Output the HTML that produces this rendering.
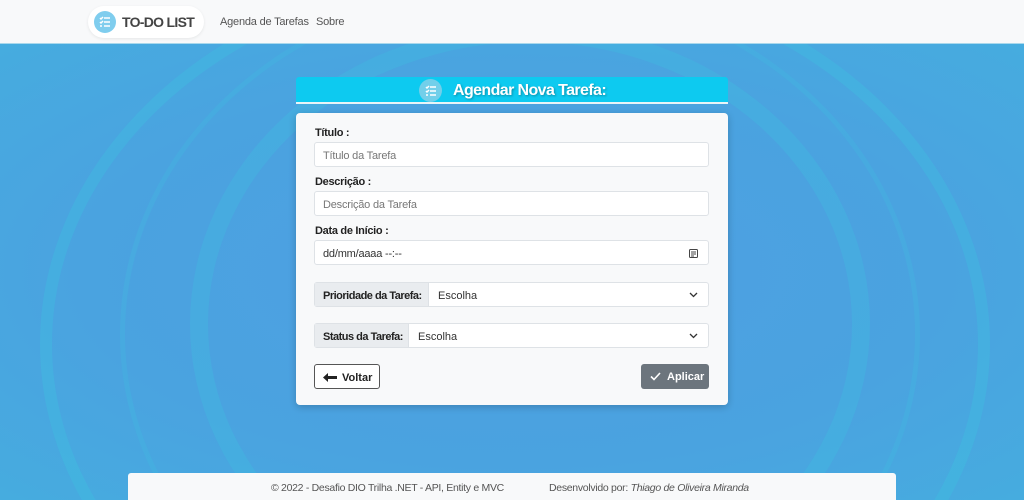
<!DOCTYPE html>
<html><head><meta charset="utf-8"><style>
*{box-sizing:border-box;margin:0;padding:0}
html,body{width:1024px;height:500px;overflow:hidden}
body{font-family:"Liberation Sans",sans-serif;position:relative;background:#4aa6e0;white-space:nowrap}
.bg{position:absolute;left:0;top:44px;width:1024px;height:456px;overflow:hidden;background:radial-gradient(ellipse at 50% 50%,#4e9fe2 0%,#4aa3e0 60%,#46acdf 100%)}
.ring{position:absolute;border-radius:50%;border-style:solid;border-color:rgba(60,200,225,.45)}
.nav{position:absolute;left:0;top:0;width:1024px;height:44px;background:#f8f9fa;border-bottom:1px solid #a9d8ec}
.logo{position:absolute;left:88px;top:6px;width:116px;height:32px;background:#fff;border-radius:16px;box-shadow:0 1px 3px rgba(0,0,0,.08)}
.ic{position:absolute;border-radius:50%;background:#7fcdee}
.logo span{position:absolute;left:34px;top:8px;font-size:14px;font-weight:bold;color:#444;letter-spacing:-.7px}
.lnk{position:absolute;top:16px;font-size:11px;color:#555;letter-spacing:-.2px}
.hdr{position:absolute;left:296px;top:77px;width:432px;height:27px;background:#0dcaf0;border-bottom:2px solid #e8f4f8;border-radius:3px 3px 0 0}
.hdr span{position:absolute;left:157px;top:5px;color:#fff;font-weight:bold;font-size:16px;letter-spacing:-.6px;text-shadow:1px 1px 2px rgba(0,0,0,.3)}
.card{position:absolute;left:296px;top:113px;width:432px;height:292px;background:#f8f9fa;border-radius:4px;box-shadow:0 2px 8px rgba(0,0,0,.2)}
.lb{position:absolute;left:19px;font-size:11px;font-weight:bold;color:#222;letter-spacing:-.3px}
.in{position:absolute;left:18px;width:395px;height:25px;background:#fff;border:1px solid #dee2e6;border-radius:3px;font-size:11px;color:#777;padding:7px 8px 0;letter-spacing:-.2px}
.sel{position:absolute;left:18px;width:395px;height:25px;background:#fff;border:1px solid #dee2e6;border-radius:3px;font-size:11px;color:#333}
.sel .g{position:absolute;left:0;top:0;height:23px;background:#e9ecef;border-right:1px solid #dee2e6;font-weight:bold;padding:7px 0 0 8px;color:#222;letter-spacing:-.5px}
.sel .v{position:absolute;top:7px}
.sel svg{position:absolute;right:10px;top:9px}
.btn{position:absolute;top:251px;height:25px;border-radius:3px;font-size:11px;font-weight:bold;padding:7px 8px 0}
.foot{position:absolute;left:128px;top:473px;width:768px;height:27px;background:#f8f9fa;border-radius:3px 3px 0 0;font-size:10.5px;color:#555;letter-spacing:-.3px}
</style></head><body>
<div class="bg">
<div class="ring" style="left:40px;top:-80px;width:950px;height:760px;border-width:12px;border-color:rgba(60,200,225,.3)"></div>
<div class="ring" style="left:190px;top:-20px;width:680px;height:600px;border-width:18px;border-color:rgba(60,200,225,.25)"></div>
<div class="ring" style="left:120px;top:-60px;width:800px;height:700px;border-width:5px;border-color:rgba(60,200,225,.2)"></div>
</div>
<div class="nav">
<div class="logo"><div class="ic" style="left:6px;top:5px;width:22px;height:22px"></div>
<svg style="position:absolute;left:11px;top:10px" width="12" height="12" viewBox="0 0 12 12" stroke="#fff" stroke-width="1.5" fill="none"><path d="M1 2l1 1 2-2M1 6l1 1 2-2M1 10h2M5 2h6M5 6h6M5 10h6"/></svg>
<span>TO-DO LIST</span></div>
<div class="lnk" style="left:220px">Agenda de Tarefas</div>
<div class="lnk" style="left:316px">Sobre</div>
</div>
<div class="hdr"><div class="ic" style="left:123px;top:2px;width:23px;height:23px;background:#72cfea"></div>
<svg style="position:absolute;left:129px;top:8px" width="12" height="12" viewBox="0 0 12 12" stroke="#fff" stroke-width="1.5" fill="none"><path d="M1 2l1 1 2-2M1 6l1 1 2-2M1 10h2M5 2h6M5 6h6M5 10h6"/></svg>
<span>Agendar Nova Tarefa:</span></div>
<div class="card">
<div class="lb" style="top:14px">Título :</div>
<div class="in" style="top:29px">Título da Tarefa</div>
<div class="lb" style="top:63px">Descrição :</div>
<div class="in" style="top:78px">Descrição da Tarefa</div>
<div class="lb" style="top:112px">Data de Início :</div>
<div class="in" style="top:127px;color:#333">dd/mm/aaaa --:--
<svg style="position:absolute;right:10px;top:7px" width="9" height="10" viewBox="0 0 9 10" fill="none" stroke="#444"><rect x=".5" y="1.5" width="8" height="8" rx="1"/><path d="M2 4h5M2 6h5M2 8h3"/></svg></div>
<div class="sel" style="top:169px"><div class="g" style="width:114px">Prioridade da Tarefa:</div><div class="v" style="left:123px">Escolha</div><svg width="9" height="6" viewBox="0 0 9 6" fill="none" stroke="#333" stroke-width="1.3"><path d="M1 1l3.5 3.5L8 1"/></svg></div>
<div class="sel" style="top:210px"><div class="g" style="width:94px">Status da Tarefa:</div><div class="v" style="left:103px">Escolha</div><svg width="9" height="6" viewBox="0 0 9 6" fill="none" stroke="#333" stroke-width="1.3"><path d="M1 1l3.5 3.5L8 1"/></svg></div>
<div class="btn" style="left:18px;width:66px;border:1px solid #555;background:#fff;color:#222;padding-left:27px">Voltar
<svg style="position:absolute;left:8px;top:8px" width="14" height="9" viewBox="0 0 14 9" fill="#222"><path d="M0 4.5L5 0v3h9v3H5v3z"/></svg></div>
<div class="btn" style="left:345px;width:68px;background:#6c757d;color:#fff;padding-left:26px">Aplicar
<svg style="position:absolute;left:9px;top:8px" width="11" height="9" viewBox="0 0 11 9" fill="none" stroke="#fff" stroke-width="1.6"><path d="M1 4.5l3 3L10 1"/></svg></div>
</div>
<div class="foot"><span style="position:absolute;left:143px;top:9px">© 2022 - Desafio DIO Trilha .NET - API, Entity e MVC</span><span style="position:absolute;left:421px;top:9px">Desenvolvido por: <i>Thiago de Oliveira Miranda</i></span></div>
</body></html>
